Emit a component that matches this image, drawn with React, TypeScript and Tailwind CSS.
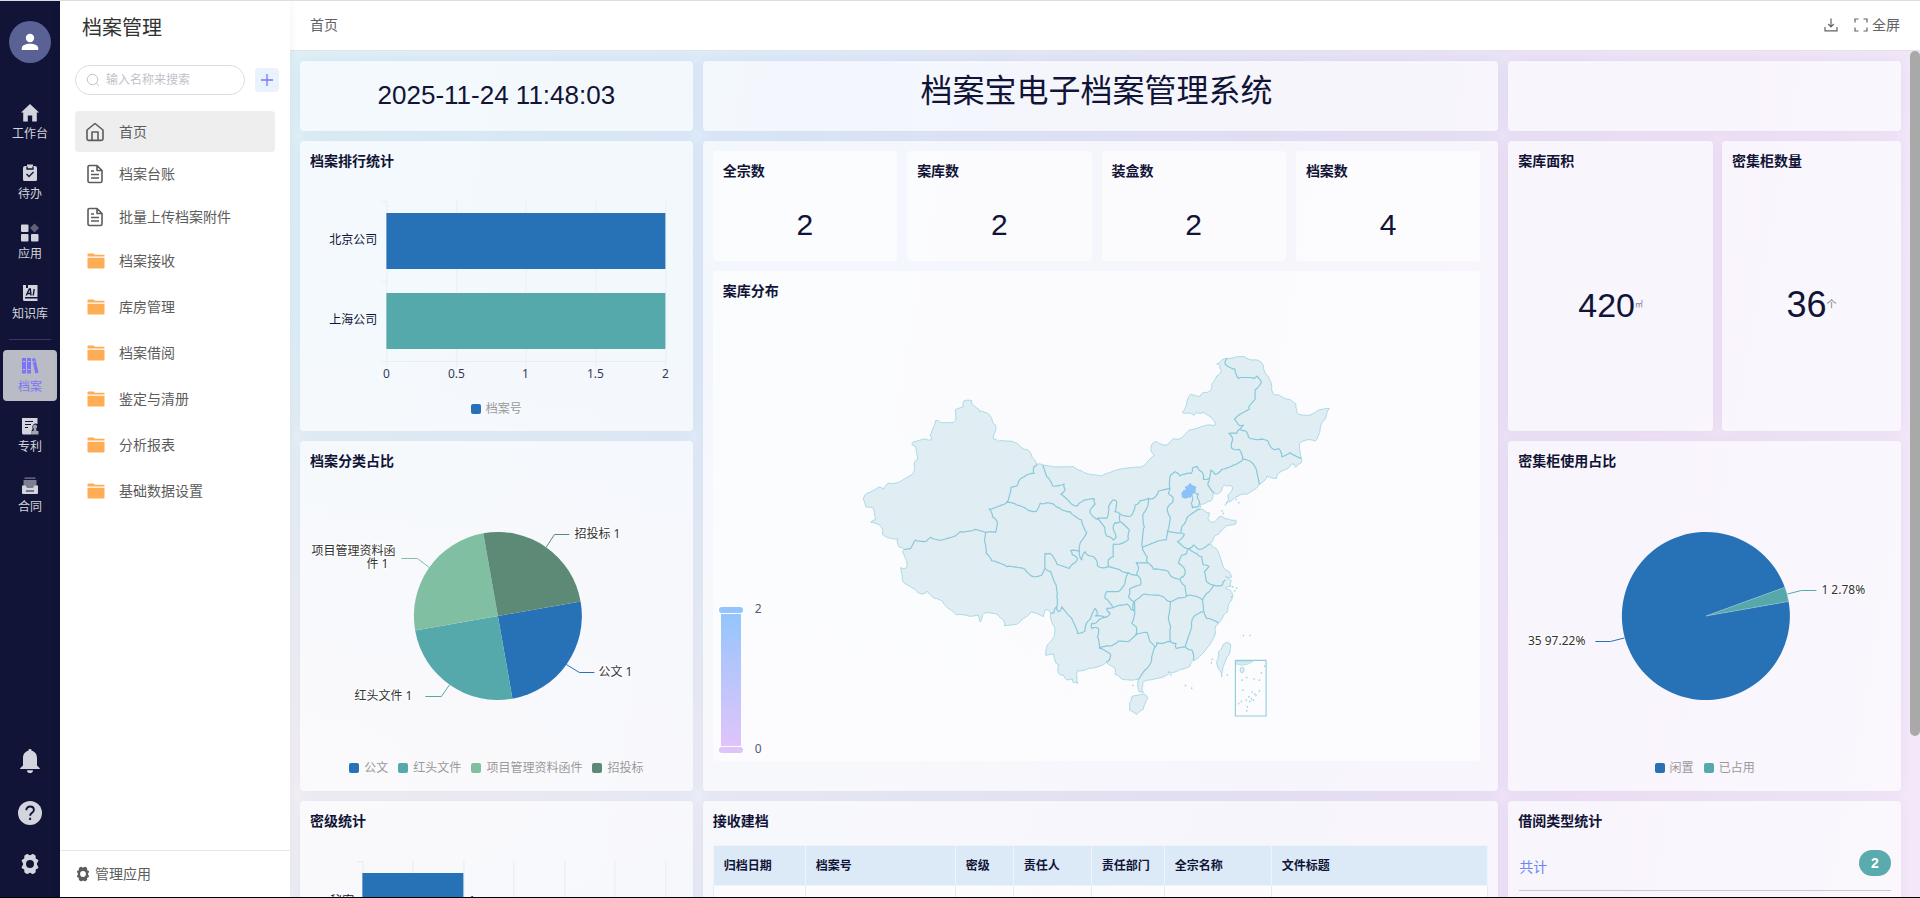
import type { ReactNode } from "react";

type Point = [number, number];

const railTop = [
  { label: "工作台", icon: "home" },
  { label: "待办", icon: "todo" },
  { label: "应用", icon: "apps" },
  { label: "知识库", icon: "ai" },
];

const railBottom = [
  { label: "档案", icon: "archive", active: true },
  { label: "专利", icon: "patent" },
  { label: "合同", icon: "contract" },
];

const leafMenu = ["档案台账", "批量上传档案附件"];
const folderMenu = ["档案接收", "库房管理", "档案借阅", "鉴定与清册", "分析报表", "基础数据设置"];

const stats = [
  { label: "全宗数", value: 2 },
  { label: "案库数", value: 2 },
  { label: "装盒数", value: 2 },
  { label: "档案数", value: 4 },
];

const columns = [
  { label: "归档日期", width: "w-[92px]" },
  { label: "档案号", width: "w-[150px]" },
  { label: "密级", width: "w-[58px]" },
  { label: "责任人", width: "w-[78px]" },
  { label: "责任部门", width: "w-[73px]" },
  { label: "全宗名称", width: "w-[107px]" },
  { label: "文件标题", width: "" },
];

const railIcons: Record<string, ReactNode> = {
  home: <path d="M10 1 1 9.5h2.2v9.1h4.6v-6h4.400v6h4.600V9.5H19z" />,
  todo: (
    <>
      <path d="M5 3h2V1.5h6V3h2a2 2 0 0 1 2 2v11.5a1.5 1.5 0 0 1-1.5 1.5h-11A1.5 1.5 0 0 1 3 16.5V5a2 2 0 0 1 2-2z" />
      <path d="M7 3.5V6h6V3.5M6.5 11 9 13.5 13.500 9" fill="none" stroke="#111436" strokeWidth="1.3" />
    </>
  ),
  apps: (
    <>
      <rect x="1" y="1.5" width="7.5" height="7.5" rx="1" />
      <rect x="1" y="11" width="7.5" height="7.5" rx="1" />
      <rect x="11" y="11" width="7.5" height="7.5" rx="1" />
      <path d="M14.5.5 19 5l-4.500 4.500L10 5z" opacity=".4" />
    </>
  ),
  ai: (
    <>
      <path d="M3 2h3v3h2V2h9.500v12H5v1.5h12.500V18h-13A1.5 1.5 0 0 1 3 16.500z" />
      <path d="m6.300 12.500 3-6.500h1l.7 6.500M7.500 10.500h3.300M13.200 12.500l1-6.500" fill="none" stroke="#111436" strokeWidth="1.4" />
    </>
  ),
  archive: (
    <>
      <path d="M2 2h4v15.500H2zM7 2h4v15.500H7zM12 2.700l3.200-.8 3.300 14.800-3.200.8z" />
      <path d="M2.800 5.500h2.400M2.800 13.500h2.400M7.800 5.500h2.400M7.800 13.500h2.400M13.200 6l2-.5" stroke="#bcbdc8" />
    </>
  ),
  patent: (
    <>
      <path d="M2 2h15.500v6a3.400 3.400 0 0 0-4.800 4.500L11.500 15v3.500h-8A1.500 1.500 0 0 1 2 17z" />
      <path d="M5 5.500h8M5 8.500h6M5 11.500h3" stroke="#111436" />
      <path d="M15 8.500a2.200 2.200 0 0 1 1.200 4l.3 2.500h2v3.500h-7V15h2l.3-2.500a2.200 2.200 0 0 1 1.200-4z" opacity=".75" />
    </>
  ),
  contract: (
    <>
      <path d="M4.500 1.500h11v1.200h-11zM3.500 4h13v8h-13z" opacity=".55" />
      <path d="M2 9.500h3.500L7 12h6l1.500-2.500H18V17a1 1 0 0 1-1 1H3a1 1 0 0 1-1-1z" />
      <path d="M6 15h8" stroke="#111436" />
    </>
  ),
};

const parse = (text: string, dx = 0): Point[] =>
  text.split(" ").map((pair) => {
    const [x, y] = pair.split(",").map(Number);
    return [x + dx, y];
  });

// Splits long segments and nudges the new points so that borders look surveyed, not ruled.
const wiggle = (points: Point[], closed = false) => {
  const out: Point[] = [];
  const count = closed ? points.length : points.length - 1;
  for (let i = 0; i < count; i++) {
    const [x1, y1] = points[i];
    const [x2, y2] = points[(i + 1) % points.length];
    const length = Math.hypot(x2 - x1, y2 - y1);
    const steps = Math.max(1, Math.round(length / 7));
    out.push([x1, y1]);
    for (let s = 1; s < steps; s++) {
      const t = s / steps;
      const n = Math.sin(x1 * 12.9 + y1 * 78.2 + s * 37.7) * 2.6;
      out.push([x1 + (x2 - x1) * t - ((y2 - y1) / length) * n, y1 + (y2 - y1) * t + ((x2 - x1) / length) * n]);
    }
  }
  if (!closed) out.push(points[points.length - 1]);
  return out.map(([x, y]) => `${x.toFixed(1)},${y.toFixed(1)}`).join(" ");
};

const northWest =
  "372,182 395,182 394,192 410,204 418,214 434,217 449,226 456,240 467,256 466,275 460,297 475,304 523,307 537,316 553,328 567,333 575,350 590,373 608,375 640,380 700,379 724,392 760,404";
const eastCoast =
  "35,408 90,388 150,382 170,368 193,345 183,332 186,312 200,305 212,312 235,313 252,296 275,294 298,270 320,265 345,257 372,258 376,252 360,230 340,217 318,218 312,226 290,219 276,217 290,187 302,162 330,169 345,157 360,153 365,132 380,108 394,92 390,76 380,72 395,60 410,55 440,50 462,49 490,60 508,63 520,78 530,105 545,140 552,165 575,170 600,178 618,192 625,223 655,226 680,213 718,205 708,232 697,245 690,270 675,304 650,300 628,310 634,355 632,370 617,382 612,372 603,372 588,388 565,400 560,415 530,408 525,420 508,433 490,450 470,463 445,468 425,482 405,496 415,478 413,465 427,448 422,436 403,435 396,448 383,462 368,463 362,483 345,490 330,492 328,508 345,514 357,518 353,535 365,547 380,540 395,528 415,537 437,540 435,553 410,557 395,570 385,583 370,595 357,612 370,622 383,632 393,660 400,682 418,695 424,712 405,708 424,722 423,740 405,745 420,750 428,765 418,788 413,815 398,832 385,850 375,868 370,895 350,925 318,958 308,962 300,978 270,988 240,998 215,1012 180,1020 158,1028 155,1045 160,1058 148,1056 143,1035 145,1018 130,1020 95,1017 75,1003 75,985 55,973 48,967 30,978 5,985";
const southWest =
  "740,988 712,992 713,1030 700,1028 697,1017 680,1020 670,1005 655,1000 657,975 648,970 640,942 617,946 622,915 640,893 643,860 632,835 632,820 618,808 610,830 590,820 573,815 550,835 530,853 493,857 488,838 472,823 440,818 427,825 421,846 416,825 388,829 350,825 330,808 308,785 285,775 262,753 245,762 225,748 193,730 187,710 182,683 200,683 196,655 187,635 192,628 178,622 172,596 150,594 127,582 123,560 92,547 105,540 98,503 77,500 70,478 80,460 115,441 130,448 147,429 168,429 220,398 222,372 233,358 226,318 215,310 258,297 273,300 270,285 287,241 300,247 340,247 347,240 345,210 370,200";

const westBorders = [
  "590,373 582,380 582,400 553,410 535,425 530,438 512,443 500,487 447,507 457,530 472,547 467,577 437,577 405,568 360,575 345,588 305,600 272,592 260,603 225,600 212,625 192,628",
  "500,487 530,495 560,508 588,514 600,490 620,488 640,492 660,505 690,515 725,540 740,577 722,605 718,635 692,632 697,645 712,655 705,668 688,685 650,672 630,640 615,640 615,685",
  "437,577 433,603 438,640 455,663 500,680 555,688 580,710 605,705 615,685",
  "615,685 632,695 645,730 650,770 650,800 642,818 632,820",
  "608,375 620,410 637,438 672,432 675,448 662,463 690,488 712,498 725,485 763,477 765,492 750,510 755,525 775,538",
  "650,800 655,815 665,800 690,830 712,880 735,872 742,845 755,825 765,805 772,820 765,828",
  "718,635 725,660 735,635 750,648 765,655 772,678",
];

const eastBorders = [
  "412,55 405,72 425,85 435,88 445,115 490,115 500,108 514,125 495,150 495,178 480,195 478,207 455,220 433,238 445,255 460,255 448,268 465,272",
  "465,272 475,292 510,298 535,305 550,328 565,325 575,350 600,338 634,355",
  "448,268 440,280 416,280 428,300 425,325 447,328 458,358",
  "458,358 485,368 500,395 508,433",
  "458,358 430,375 395,388 375,403 362,390 358,415 353,430 372,458",
  "358,415 340,418 335,395 322,380 307,385 303,400 270,408 255,395 242,405 240,445",
  "312,455 325,462 322,475 328,490 325,500 307,503 303,490 308,475 305,462",
  "240,445 235,460 248,470 248,487 232,505 240,530 233,572",
  "240,445 205,453 190,475 175,475 172,500 160,520 163,560 157,622",
  "175,475 150,482 135,495 122,528 90,522",
  "90,522 75,515 80,485 68,480 55,500 50,535 22,535 45,565 50,588 70,600 78,590 70,570 75,548 90,545 90,522",
  "90,545 118,572 115,598 95,610 70,612 70,650 55,660 55,680",
  "22,678 45,683 55,680 90,690 115,698 140,705 152,720 152,735",
  "140,705 145,690 138,668 172,668 172,650 157,622 195,607 228,600 233,572 272,578",
  "272,578 275,560 290,535 328,508",
  "272,578 283,583 262,605 280,620 297,625 310,615 325,628 345,622 357,612",
  "297,625 290,640 275,645 265,670 285,690 280,710 270,718",
  "297,625 320,640 335,650 340,675 357,680 343,695 348,722 370,735",
  "172,668 190,688 235,695 250,713 270,718 285,738 290,768",
  "290,768 310,768 337,780 350,760 370,735 397,735 405,720",
  "337,780 340,810 350,835 385,850",
  "340,815 310,832 305,860 285,920",
  "290,768 265,773 240,785 225,775 200,765 165,762 150,772 132,785 115,770 118,748 152,735",
  "115,698 105,730 85,755 50,755 45,775 68,803 90,795 110,792 122,808 130,812 132,785",
  "15,828 45,832 60,820 50,805 68,803",
  "45,832 22,845 5,850 5,865 25,865 22,890 28,925",
  "132,785 132,830 125,850 138,860 137,885",
  "28,925 60,918 85,903 115,905 137,885 172,878 180,905 195,922",
  "195,922 200,908 225,908 242,905 258,910 258,925 285,920 305,930 310,960",
  "240,785 235,830 242,860 242,905",
  "195,922 185,960 165,990 150,1012 145,1018",
  "28,925 62,945 58,960 48,967",
];

const beijing =
  "275,460 280,452 290,449 285,441 294,438 300,430 308,438 318,441 316,452 311,459 304,463 302,472 290,474 277,472";
const taiwan = "412,907 421,912 416,945 398,990 395,1010 388,990 380,965 385,935 398,915";
const hainan = "125,1070 165,1063 173,1075 160,1108 140,1123 118,1110 118,1090";

const islets = parse(
  "438,478 446,488 396,512 400,520 428,740 440,744 434,752 424,770 460,886 480,886 366,958 364,968 412,1004 286,1036 305,1044 128,1036 236,996 242,1004 456,1020 470,1012 492,1016 508,1020 514,998 458,1050 486,1056 494,1062 508,1052 476,1070 484,1076 490,1080 498,1066 468,1080 454,1084 446,1090 480,1084 472,1100 470,1112 524,978",
  750,
);

function ChinaMap() {
  const country = [...parse(northWest), ...parse(eastCoast, 750), ...parse(southWest)];
  return (
    <svg viewBox="20 0 1500 1200" className="h-[400px] w-full" fill="none" strokeLinejoin="round">
      <polygon points={wiggle(country, true)} fill="#e0edf3" stroke="#a9dbe6" strokeWidth="3" />
      <g fill="#e0edf3" stroke="#a9dbe6" strokeWidth="3">
        <polygon points={wiggle(parse(taiwan, 750), true)} />
        <polygon points={wiggle(parse(hainan, 750), true)} />
      </g>
      <g stroke="#86c8d9" strokeWidth="3.5">
        {westBorders.map((line) => (
          <polyline key={line} points={wiggle(parse(line))} />
        ))}
        {eastBorders.map((line) => (
          <polyline key={line} points={wiggle(parse(line, 750))} />
        ))}
      </g>
      <polygon points={wiggle(parse(beijing, 750), true)} fill="#8cc2fb" stroke="#7db8ee" strokeWidth="2" />
      {islets.map(([x, y]) => (
        <rect key={`${x}-${y}`} x={x - 2} y={y - 2} width="4" height="5" fill="#9fd6e2" />
      ))}
      <path d="M1187 964h52l-14 8-18 4-20-4z" fill="#d5e9ef" stroke="#a9dbe6" strokeWidth="2" />
      <ellipse cx="1206" cy="990" rx="6" ry="8" fill="#e0edf3" stroke="#a9dbe6" strokeWidth="3" />
      <rect x="1186" y="961" width="92" height="167" stroke="#92cfdd" strokeWidth="3.5" />
    </svg>
  );
}

const chartText = "font-['Noto_Sans','Noto_Sans_CJK_SC',sans-serif] text-xs";

function Card({ title, className, children }: { title?: string; className: string; children?: ReactNode }) {
  return (
    <section className={`rounded bg-white/65 shadow-[0_0_12px_rgba(60,60,110,0.06)] ${className}`}>
      {title ? <h2 className="px-[10px] pt-[10px] text-sm leading-5 font-semibold">{title}</h2> : null}
      {children}
    </section>
  );
}

function Legend({ items }: { items: { label: string; color: string }[] }) {
  return (
    <ul className={`flex justify-center gap-[10px] pt-px leading-4 text-[#999] ${chartText}`}>
      {items.map((item) => (
        <li key={item.label} className="flex items-center gap-[5px]">
          <span className={`size-[10px] rounded-xs ${item.color}`} />
          {item.label}
        </li>
      ))}
    </ul>
  );
}

const slice = (from: number, to: number) => {
  const at = (deg: number) => {
    const rad = (deg * Math.PI) / 180;
    return `${(197.5 + 84 * Math.cos(rad)).toFixed(2)} ${(145 + 84 * Math.sin(rad)).toFixed(2)}`;
  };
  return `M197.5 145L${at(from)}A84 84 0 ${to - from > 180 ? 1 : 0} 1 ${at(to)}z`;
};

function RankChart() {
  return (
    <svg viewBox="0 0 392 225" className={`h-[225px] w-full fill-[#111436] ${chartText}`}>
      <path
        d="M86.5 30v166M156.5 30v166M225.5 30v166M295.5 30v166M365.5 30v166M81 30.5h6M81 110.5h6M81 190.5h285"
        stroke="#ebeef0"
      />
      <path d="M86 42h279v56H86z" fill="#2772b7" />
      <path d="M86 122h279v56H86z" fill="#56a9ab" />
      <g textAnchor="end">
        <text x="77" y="73">北京公司</text>
        <text x="77" y="153">上海公司</text>
      </g>
      <g textAnchor="middle" opacity=".85">
        <text x="86" y="207">0</text>
        <text x="156" y="207">0.5</text>
        <text x="225" y="207">1</text>
        <text x="295" y="207">1.5</text>
        <text x="365" y="207">2</text>
      </g>
    </svg>
  );
}

function CategoryPie() {
  return (
    <svg viewBox="0 0 392 288" className={`h-[288px] w-full ${chartText}`}>
      <path d={slice(-10, 80)} fill="#2772b7" />
      <path d={slice(80, 170)} fill="#56a9ab" />
      <path d={slice(170, 260)} fill="#81bfa2" />
      <path d={slice(260, 350)} fill="#5d8a76" />
      <g fill="none">
        <path d="M266 193.500l13 8h15" stroke="#2772b7" />
        <path d="M149 214l-8 11.500h-16" stroke="#56a9ab" />
        <path d="M129 96.500l-12-9h-16" stroke="#81bfa2" />
        <path d="M246 76l8-12.500h15" stroke="#5d8a76" />
      </g>
      <g fill="#333" stroke="#fff" strokeWidth="2" paintOrder="stroke">
        <text x="298" y="205">公文 1</text>
        <text x="274" y="67">招投标 1</text>
        <text>
          <tspan x="11" y="84">项目管理资料函</tspan>
          <tspan x="66" y="97">件 1</tspan>
        </text>
        <text x="112" y="229" textAnchor="end">红头文件 1</text>
      </g>
    </svg>
  );
}

function CabinetPie() {
  return (
    <svg viewBox="0 0 392 288" className={`h-[288px] w-full ${chartText}`}>
      <path d={slice(-10, 340)} fill="#2772b7" />
      <path d={slice(-20, -10)} fill="#56a9ab" stroke="#9cc4d6" strokeWidth=".5" />
      <g fill="none">
        <path d="M279 123l14-3.500h15" stroke="#56a9ab" />
        <path d="M116 167l-14 3.500H87" stroke="#2772b7" />
      </g>
      <g fill="#333" stroke="#fff" strokeWidth="2" paintOrder="stroke">
        <text x="313" y="123">1 2.78%</text>
        <text x="77" y="174" textAnchor="end">35 97.22%</text>
      </g>
    </svg>
  );
}

function SecretChart() {
  return (
    <svg viewBox="0 0 392 240" className={`h-[240px] w-full fill-[#111436] ${chartText}`}>
      <path
        d="M62.5 30v200M112.5 30v200M163.5 30v200M213.5 30v200M264.5 30v200M314.5 30v200M365.5 30v200M57 30.5h6"
        stroke="#e9eaee"
      />
      <path d="M62 42h101v56H62z" fill="#2772b7" />
      <text x="54" y="74" textAnchor="end">秘密</text>
      <text x="168" y="74">1</text>
    </svg>
  );
}

function Gear({ className }: { className: string }) {
  return (
    <svg viewBox="0 0 20 20" className={className} fill="currentColor" fillRule="evenodd">
      <path d="M7.200 1c1.200-.6 1.600 1 2.800 1s1.600-1.600 2.800-1l1.900 1.100c1.100.7 0 1.900.6 2.900s2.200.6 2.300 1.900c-.1 1.300-1.300 1.800-1.300 3.100s1.200 1.800 1.300 3.100c-.1 1.300-1.700.9-2.300 1.900s.5 2.200-.6 2.900L12.800 19c-1.200.6-1.600-1-2.800-1s-1.600 1.600-2.800 1l-1.900-1.100c-1.100-.7 0-1.900-.6-2.900s-2.200-.6-2.300-1.900c.1-1.300 1.300-1.800 1.300-3.100S2.500 8.200 2.400 6.900C2.500 5.600 4.100 6 4.700 5s-.5-2.200.6-2.900zM10 6.400a3.600 3.600 0 1 0 0 7.200 3.600 3.600 0 0 0 0-7.200z" />
    </svg>
  );
}

function RailItem({ label, icon, active }: { label: string; icon: string; active?: boolean }) {
  return (
    <a
      href="#"
      className={`flex h-[51px] w-[54px] flex-col items-center gap-px rounded pt-[6px] text-xs leading-5 ${
        active ? "bg-[#b9bcc5] text-[#7b74f5]" : "text-[#d3d4dd]"
      }`}
    >
      <svg viewBox="0 0 20 20" className="size-5" fill="currentColor">
        {railIcons[icon]}
      </svg>
      {label}
    </a>
  );
}

function Rail() {
  return (
    <nav className="flex w-[60px] shrink-0 flex-col items-center bg-[#111436] pt-5 text-[#d3d4dd]">
      <button aria-label="用户" className="flex size-[42px] shrink-0 items-center justify-center rounded-full bg-[#5a6295]">
        <svg viewBox="0 0 18 18" className="size-[18px]" fill="#fff">
          <circle cx="9" cy="5" r="4.2" />
          <path d="M.8 17v-1.800c0-2.800 3.600-4.400 8.200-4.400s8.200 1.600 8.200 4.400V17z" />
        </svg>
      </button>
      <div className="mt-[34px] flex flex-col gap-[9px]">
        {railTop.map((item) => (
          <RailItem key={item.label} {...item} />
        ))}
      </div>
      <hr className="mt-[11px] mb-[10px] w-[42px] border-[#34385c]" />
      <div className="flex flex-col gap-[9px]">
        {railBottom.map((item) => (
          <RailItem key={item.label} {...item} />
        ))}
      </div>
      <div className="mt-auto mb-[22px] flex flex-col items-center gap-7">
        <button aria-label="通知">
          <svg viewBox="0 0 24 24" className="size-6" fill="currentColor">
            <path d="M12 0a1.600 1.600 0 0 1 1.600 1.800C17 2.500 19 5.400 19 9v7.500l2.800 2.800V20H2.200v-.7L5 16.500V9c0-3.600 2-6.500 5.400-7.200A1.600 1.600 0 0 1 12 0zM9 21.200h6a3 3 0 0 1-6 0z" />
          </svg>
        </button>
        <button aria-label="帮助">
          <svg viewBox="0 0 24 24" className="size-6">
            <circle cx="12" cy="12" r="12" fill="currentColor" />
            <path d="M8.300 9.300c0-5.200 7.600-4.800 7.600-.3 0 2.900-3.800 2.800-3.800 5.800M12.100 16.800v2.200" fill="none" stroke="#111436" strokeWidth="1.9" />
          </svg>
        </button>
        <button aria-label="设置">
          <Gear className="size-[22px]" />
        </button>
      </div>
    </nav>
  );
}

function Sidebar() {
  return (
    <aside className="z-10 flex w-[230px] shrink-0 flex-col bg-white text-sm text-[#5c5c5c] shadow-[0_0_10px_rgba(0,0,0,0.05)]">
      <h1 className="pt-[11px] pl-[22px] text-xl leading-8 text-[#333]">档案管理</h1>
      <div className="mt-[21px] flex items-center gap-[10px] pl-[15px]">
        <label className="flex h-[30px] w-[170px] items-center gap-[6px] rounded-full border border-[#dcdce4] pl-[10px]">
          <svg viewBox="0 0 14 14" className="size-[14px] shrink-0" fill="none" stroke="#bfc2ca">
            <circle cx="6.5" cy="6.5" r="5.2" />
            <path d="m10.300 10.300 2.500 2.500" />
          </svg>
          <input
            type="text"
            aria-label="搜索"
            placeholder="输入名称来搜索"
            className="w-full min-w-0 bg-transparent text-xs outline-none placeholder:text-[#bfc2ca]"
          />
        </label>
        <button aria-label="新增" className="flex size-6 items-center justify-center rounded bg-[#ebf2ff]">
          <svg viewBox="0 0 12 12" className="size-3" stroke="#7579f5" strokeWidth="1.3">
            <path d="M6 0v12M0 6h12" />
          </svg>
        </button>
      </div>
      <nav className="mt-4 flex flex-col px-[15px]">
        <a href="#" className="flex h-[41px] items-center gap-[14px] rounded bg-[#eee] pl-[10px]">
          <svg viewBox="0 0 20 20" className="size-5" fill="none" stroke="currentColor" strokeWidth="1.6" strokeLinejoin="round">
            <path d="M2 8 10 1.500 18 8v8.800a1.600 1.600 0 0 1-1.600 1.600H3.600A1.600 1.600 0 0 1 2 16.800z" />
            <path d="M7 18.400V10h6v8.400" />
          </svg>
          首页
        </a>
        {leafMenu.map((label) => (
          <a key={label} href="#" className="flex h-[43px] items-center gap-[14px] pl-[10px]">
            <svg viewBox="0 0 20 20" className="size-5" fill="none" stroke="currentColor" strokeWidth="1.6" strokeLinejoin="round">
              <path d="M12 1.500H4.500A1.500 1.500 0 0 0 3 3v14a1.500 1.500 0 0 0 1.500 1.500h11A1.500 1.500 0 0 0 17 17V6.500zM12 1.500v5h5M6 7h3M6 10.500h8M6 14h8" />
            </svg>
            {label}
          </a>
        ))}
        {folderMenu.map((label) => (
          <a key={label} href="#" className="flex h-[46px] items-center gap-[14px] pl-[10px]">
            <svg viewBox="0 0 20 20" className="size-5" fill="#ffad55">
              <path d="M2.500 3.500a1 1 0 0 1 1-1h5L10 3.800h9.500v1.700h-17zM2.500 6.800h17v9.700a1 1 0 0 1-1 1h-15a1 1 0 0 1-1-1z" />
            </svg>
            {label}
          </a>
        ))}
      </nav>
      <a href="#" className="mt-auto flex h-[47px] items-center gap-1 border-t border-[#e8e8e8] pl-[15px]">
        <Gear className="size-4" />
        管理应用
      </a>
    </aside>
  );
}

function Header() {
  return (
    <header className="flex h-[50px] shrink-0 items-center justify-between border-b border-[#e3e3e6] bg-white px-5 pb-[2px] text-sm text-[#606266]">
      <span>首页</span>
      <div className="flex items-center gap-4">
        <button aria-label="下载">
          <svg viewBox="0 0 14 14" className="size-[14px]" fill="none" stroke="currentColor" strokeWidth="1.2">
            <path d="M7 .5v8M4.200 6 7 8.800 9.800 6M1 9v3.800h12V9" />
          </svg>
        </button>
        <button className="flex items-center gap-1">
          <svg viewBox="0 0 14 14" className="size-[14px]" fill="none" stroke="currentColor" strokeWidth="1.2">
            <path d="M1 4.500V1h3.500M9.500 1H13v3.500M13 9.500V13H9.500M4.500 13H1V9.500" />
          </svg>
          全屏
        </button>
      </div>
    </header>
  );
}

function MapCard() {
  return (
    <div className="rounded bg-white/60 pb-[8px]">
      <h2 className="px-[10px] pt-[10px] text-sm leading-5 font-semibold">案库分布</h2>
      <div className="relative pt-[39px] pb-[13px]">
        <ChinaMap />
        <div className="absolute bottom-0 left-[6px] flex gap-3">
          <div className="flex w-6 flex-col items-center gap-px">
            <span className="h-[6px] w-6 rounded-full bg-[#93c5fc]" />
            <span className="h-[132px] w-5 bg-linear-to-b from-[#93c5fc] to-[#dfc4fa]" />
            <span className="h-[6px] w-6 rounded-full bg-[#dfc4fa]" />
          </div>
          <div className={`flex flex-col justify-between text-[#555a70] ${chartText}`}>
            <span className="leading-[4px]">2</span>
            <span className="leading-[8px]">0</span>
          </div>
        </div>
      </div>
    </div>
  );
}

function Dashboard() {
  return (
    <main className="grid min-w-0 flex-1 auto-rows-max grid-cols-4 gap-[10px] overflow-hidden pt-[10px] pr-[9px] pl-[10px] text-[#111436]">
      <Card className="flex h-[70px] items-center justify-center pb-[2px] text-[26px]">2025-11-24 11:48:03</Card>
      <Card className="col-span-2 flex h-[70px] items-start justify-center pt-1 pr-2">
        <h2 className="text-[32px] leading-[52px]">档案宝电子档案管理系统</h2>
      </Card>
      <Card className="h-[70px]" />

      <Card title="档案排行统计" className="h-[290px]">
        <RankChart />
        <div className="pt-1">
          <Legend items={[{ label: "档案号", color: "bg-[#2772b7]" }]} />
        </div>
      </Card>
      <Card className="col-span-2 row-span-2 flex flex-col gap-[10px] pt-[10px] pr-[18px] pl-[10px]">
        <div className="grid grid-cols-4 gap-[10px]">
          {stats.map((stat) => (
            <div key={stat.label} className="h-[110px] rounded bg-white/60">
              <h2 className="px-[10px] pt-[10px] text-sm leading-5 font-semibold">{stat.label}</h2>
              <p className="pt-6 text-center text-3xl leading-10">{stat.value}</p>
            </div>
          ))}
        </div>
        <MapCard />
      </Card>
      <div className="flex gap-[9px]">
        <Card title="案库面积" className="flex-8">
          <p className="flex items-center justify-center pt-[114px] text-[34px] leading-10">
            420<small className="text-[8px] text-[#777a90]">㎡</small>
          </p>
        </Card>
        <Card title="密集柜数量" className="flex-7">
          <p className="flex items-center justify-center pt-[114px] text-4xl leading-10">
            36<small className="text-[10px] text-[#777a90]">个</small>
          </p>
        </Card>
      </div>

      <Card title="档案分类占比" className="h-[350px]">
        <CategoryPie />
        <Legend
          items={[
            { label: "公文", color: "bg-[#2772b7]" },
            { label: "红头文件", color: "bg-[#56a9ab]" },
            { label: "项目管理资料函件", color: "bg-[#81bfa2]" },
            { label: "招投标", color: "bg-[#5d8a76]" },
          ]}
        />
      </Card>
      <Card title="密集柜使用占比" className="h-[350px]">
        <CabinetPie />
        <Legend
          items={[
            { label: "闲置", color: "bg-[#2772b7]" },
            { label: "已占用", color: "bg-[#56a9ab]" },
          ]}
        />
      </Card>

      <Card title="密级统计" className="h-[290px]">
        <SecretChart />
      </Card>
      <Card title="接收建档" className="col-span-2">
        <div className="px-[10px] pt-[14px]">
          <table className="w-full table-fixed border-collapse text-left text-xs">
            <thead>
              <tr className="h-10 bg-[#dceaf7]">
                {columns.map((column) => (
                  <th key={column.label} className={`border border-[#edf4fb] px-[10px] font-semibold ${column.width}`}>
                    {column.label}
                  </th>
                ))}
              </tr>
            </thead>
            <tbody>
              <tr className="h-10 bg-white/60">
                {columns.map((column) => (
                  <td key={column.label} className="border border-[#e3ecf6]" />
                ))}
              </tr>
            </tbody>
          </table>
        </div>
      </Card>
      <Card title="借阅类型统计">
        <div className="mr-[10px] ml-[11px] flex h-[60px] items-center justify-between border-b border-[#c9c9d6] pt-1">
          <span className="pt-2 text-sm text-[#6b86f6]">共计</span>
          <span className="flex h-[26px] w-8 items-center justify-center rounded-full bg-[#5aabad] text-sm font-semibold text-white">
            2
          </span>
        </div>
      </Card>
    </main>
  );
}

export default function App() {
  return (
    <div className="flex h-screen overflow-hidden border-t border-b border-t-[#dedede] border-b-black bg-white font-['Liberation_Sans','Noto_Sans_CJK_SC',sans-serif]">
      <Rail />
      <Sidebar />
      <div className="flex min-w-0 flex-1 flex-col">
        <Header />
        <div className="flex min-h-0 flex-1 bg-[radial-gradient(ellipse_at_0%_85%,#f2eef5_0%,transparent_45%),linear-gradient(100deg,#deeff7_0%,#dce9f9_28%,#e5e2f6_55%,#efe2f7_80%,#f3e8fa_100%)]">
          <Dashboard />
          <div className="w-[10px] shrink-0">
            <div className="h-[81%] rounded-full bg-[#a9a9a9]" />
          </div>
        </div>
      </div>
    </div>
  );
}
